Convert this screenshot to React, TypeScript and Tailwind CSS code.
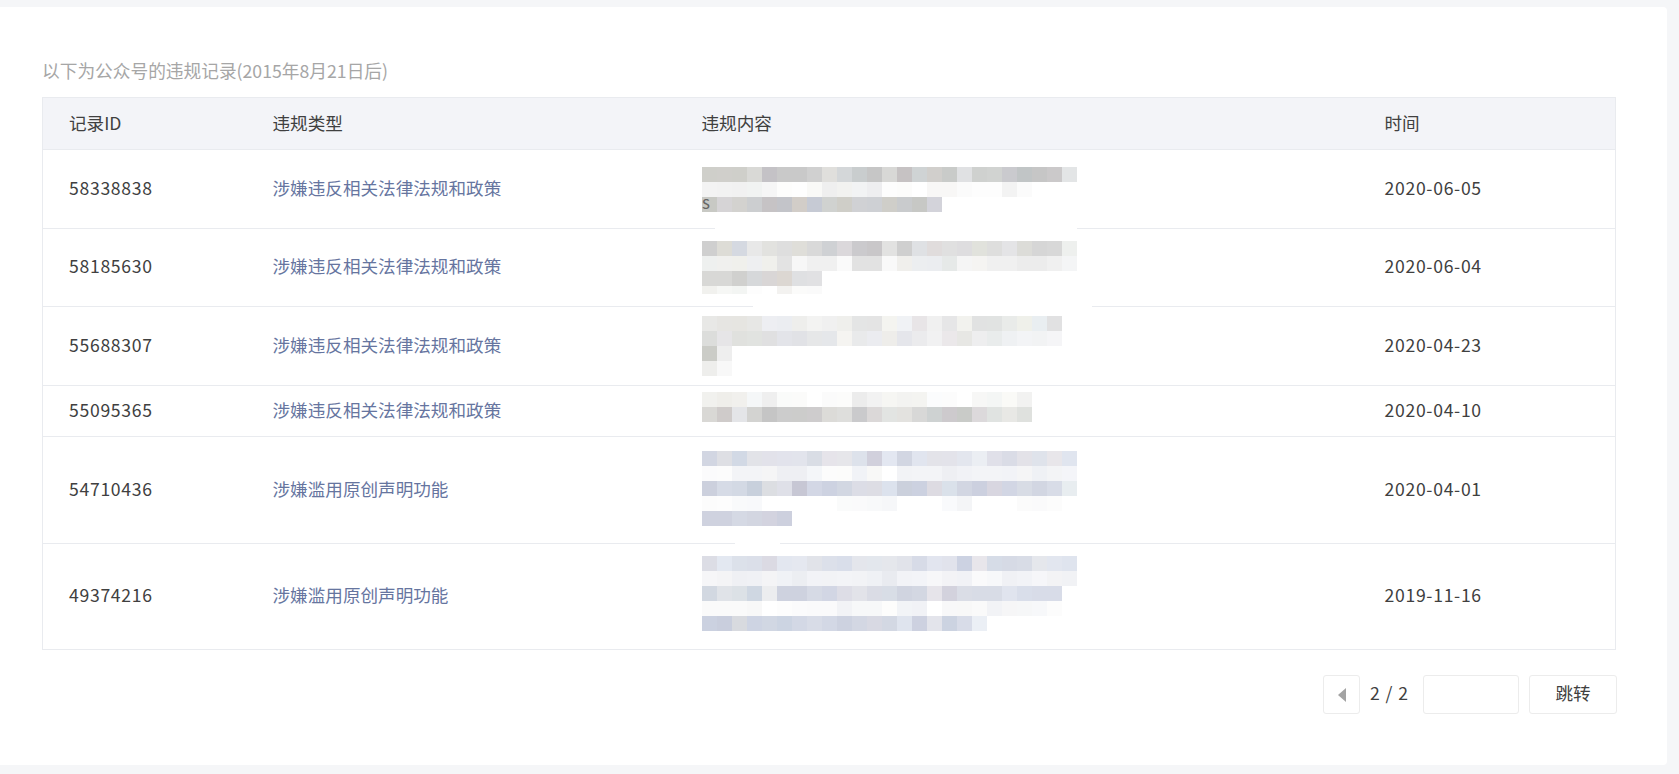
// 违规记录 table, the blurred column is drawn as mosaic blocks
const M1 = [
  'cfcfca d0cfcb cfcfca d9d9d6 c4c2c6 c9c9c9 c9c9c9 d0d0d0 e0dfdc d4d7d9 c9cdce c6c6c6 d8d8d6 c6c2c3 cfd3d4 d1cfcc c9cbc9 e0e1e3 cfd1cf d1d3d1 cacace c1c5c6 c6c6c6 cbc9ca e3e5e6',
  'f3f3f3 f2f2f2 f1f1f1 f1f3f2 f6f6f6 fdfdfc fefefe f9f9f7 efefef f2f2f0 f2f3f4 eeeef0 fdfdfd fcfcfb ffffff f8f7f6 f8f7f6 fbfbfb fdfdfd fdfdfd f3f3f3 fbfbfb',
  'c8c9c4 d6d4d6 d3d2cf ccced0 c6c3c5 c3c4c9 d2cdc8 c6cad4 d0d2d0 cfcec8 d0d1d4 ced0d4 cfcec9 c9cbcd c7c8c5 d3d3da',
]
const M2 = [
  'cfcfcf dddcd6 d5d9e1 e8e8e8 e2e2df dedede dfded9 d9d9d9 cfd1d4 dbd8db cbcacd c9c7c9 e2e2e1 cfcfcf dfe1e4 e0dcdc e0e0e0 dedddf e1e2dc dededd e4e4e6 dcdcd8 d6d6d6 d8d8d8 eef0ee',
  'eef0ef f0f0ee f0f0ec eeeff1 f0f0ec e3e3e3 f7f7f7 f0f0f0 f0f0f0 fafafa e2e2e2 e2e2e2 f9f9f9 f0efec eceef0 ebedf0 e6e9e8 f5f5f5 f5f4f2 f0f0f0 f0f0f0 ececec ececec f0f0f0 f4f5f6',
  'd8d8d6 d8d8d6 d0d0ce d6d8da d9d6d6 dcd7d2 dfe0e2 e1e1e3',
  'f1f1ee f6f7f5 f3f5f3 fdfdfd ffffff f3f2f0 fbfbfa fafafa',
]
const M3 = [
  'e8e8e6 e6e5e2 e6e5e1 e7e7e5 edeef2 ebedf1 eeeeec f3f3f2 f0f0f0 efefec e4e5e5 e4e4e4 f4f4f0 f0f2f5 e8e5e7 f0f0f0 e6e6e7 f2f2ee e1e2e2 e1e3e2 e9ebe9 eff0ea e9eef1 e1e1e2',
  'dcdddb e6e5e7 e0e1de e1e3e0 e0e0e1 e3e4e9 e1e2e6 e6e7e8 e5e7ea f5f4f1 e9eaeb ebecf0 eeedea e5e6eb ebebed f1f1f2 ebe8ea e7e7e4 eeeeef e9ecec eff1f3 f3f4f6 f2f3f4 f5f5f7',
  'cbccc7 eeeeee',
  'eeeeec f8f8f8',
]
const M4 = [
  'f1f1ee efeeea f1f0ed f5f7f8 efefef fafbfa fbfbfa ffffff fbfbfb fcfcfb ececec f2f2f2 f6f6f3 f3f3f1 f4f4f1 fbfcfd fcfcfc ffffff f7f7f6 f4f6f5 fafaf7 f2f2f1',
  'd9d8d5 cfcbca e4e5e8 d3d3d1 c5c5c5 cccccc cccccb cecccd dcdbd8 dededc cacacc dbd8d8 e2e4e2 e3e2df d8d8d7 ced2d2 cdcacd c9cbc8 dcd9db e0e3e1 e8e8e5 dfe1de',
]
const M5 = [
  'd2d6e2 dedfe4 d2d9e5 e2e3e8 e2e2ea e2e3ec e2e4ec d9dde5 e6e4ea e6e6ea dde2eb d1d0dc e3e7f1 d2d6e2 e1e5ef e3e3e9 e3e3ea e3e6ee ebeef3 e0e0e9 dadce6 e3e2e8 dfe3eb e8e6ea e0e5ef',
  'fbfbfc fcfcfc f3f4f7 f3f4f7 f5f5f6 eeeff3 eeeff3 f4f6f9 fcfcfc fcfcfb f1f3f7 f8f8f7 ffffff f2f3f6 f3f4f7 f3f4f7 eeeff3 f1f2f6 f3f4f7 f3f4f7 f2f3f7 f5f5f6 eff1f5 f3f4f6 f4f5f9',
  'ccd0dd d6dbe6 d3d9e4 c8d0dc dcdee2 dfe0e8 c7c7d4 d3d7e5 cdd2e1 d2d7e2 dcdde6 dddde4 dce2ed cbd0dc ccd1e0 dddbe2 dae1ea d2d6e2 ccd0df d8d6e0 d2d6e4 d8dce5 d2d6e2 d8dce7 e8edf0',
  'fcfcfc fdfdfd f9fafb f8f9fb ffffff ffffff ffffff ffffff ffffff fafbfb fafafb f8f9fa f6f7f9 ffffff ffffff ffffff f9fafc f4f5f7 ffffff ffffff ffffff fbfbfb fafafb fcfcfc',
  'cfd2df cfd2df d5d9e4 d3d6e1 d3d3df cdd0de',
]
const M6 = [
  'dcdde5 e3e8f1 dce1ea dbdfe9 dbdae3 e3e7f0 e5e8f0 e1e3e9 dce0ea d9deea e4e6ec e3e7ed e5e7ec e1e3ea d7dbe7 e2e5ef e1e3ec ccd2e2 e8e6eb d6dce7 d6dae5 d8dce6 e5e7ec e2e6ef dfe4ee',
  'f6f6f8 f4f4f6 eff0f4 f0f1f5 f4f4f6 f0f2f6 eceef2 f2f3f7 f2f3f6 f3f4f7 f2f3f6 eff1f5 e9ebf0 f2f3f7 f3f4f8 f7f7f9 f3f3f6 f1f2f6 fafafb f7f8fa f0f1f5 f2f3f7 f6f6f9 f3f3f5 f1f2f5',
  'd2d8e1 e0e3e8 dce1e6 cfd7e2 ecedef ced2df ced2df d6dae5 d2d6e4 dddde6 e2e3e9 dadce5 d8dde6 d0d4e0 d3d7e2 e6e4ea d3d2dd dadde6 d8dce6 d8dce6 e0e4ee d9deea d8dce8 d8dce8',
  'fafafa fafafa fafafa f8f8f8 ffffff fdfdfd fbfbfc fafafb fafafb f2f3f6 f7f8f9 f7f8f9 fdfdfc f2f4f7 f1f2f6 ffffff f8f8f9 f8f8f8 fafafa f2f3f6 f6f6f7 f6f7f8 f7f8fa fcfcfc',
  'cbd1e0 c9cedd d8dadf ced4e3 d1d7e3 ccd4e2 d3d8e5 d8dce7 d3d8e5 cdd2e0 d3d7e3 d8d9e3 d3d8e3 dfe4ee cdd1e0 e3e4eb ccd3e1 d8dce8 ebeff5',
]

const records = [
  { id: '58338838', type: '涉嫌违反相关法律法规和政策', date: '2020-06-05', blocks: M1, h: 45, row: 'h-[79px]', pad: 'pt-[17px]' },
  { id: '58185630', type: '涉嫌违反相关法律法规和政策', date: '2020-06-04', blocks: M2, h: 53, row: 'h-[78px]', pad: 'pt-[12px]' },
  { id: '55688307', type: '涉嫌违反相关法律法规和政策', date: '2020-04-23', blocks: M3, h: 60, row: 'h-[79px]', pad: 'pt-[9px]' },
  { id: '55095365', type: '涉嫌违反相关法律法规和政策', date: '2020-04-10', blocks: M4, h: 30, row: 'h-[51px]', pad: 'pt-[6px]' },
  { id: '54710436', type: '涉嫌滥用原创声明功能', date: '2020-04-01', blocks: M5, h: 75, row: 'h-[107px]', pad: 'pt-[14px]' },
  { id: '49374216', type: '涉嫌滥用原创声明功能', date: '2019-11-16', blocks: M6, h: 75, row: 'h-[106px]', pad: 'pt-[12px]' },
]

function Mosaic({ blocks, h }: { blocks: string[]; h: number }) {
  return (
    <svg width="375" height={h} className="block">
      {blocks.map((line, y) =>
        line.split(' ').map((c, x) => (
          <rect key={`${y}-${x}`} x={x * 15} y={y * 15} width="15" height="15" fill={`#${c}`} />
        )),
      )}
    </svg>
  )
}

function App() {
  return (
    <div
      className="h-[774px] overflow-hidden bg-[#f5f6f8] pt-[7px] text-[17.6px] text-[#404040]"
      style={{ fontFamily: '"Noto Sans CJK SC", "Noto Sans", sans-serif' }}
    >
      <div className="h-[758px] w-[1667px] rounded-r-[4px] bg-white pl-[42px] pt-[50px]">
        <p className="h-[40px] text-[17.7px] leading-[26px] text-[#a6a6a6]">以下为公众号的违规记录(2015年8月21日后)</p>

        <div className="relative w-[1574px]">
          <table className="w-full table-fixed border-collapse border border-[#e9ebef]">
            <thead>
              <tr className="h-[52px] bg-[#f3f4f8] text-left">
                <th className="w-[230px] pb-[1px] pl-[26px] font-normal">记录ID</th>
                <th className="w-[429px] pb-[1px] font-normal">违规类型</th>
                <th className="w-[683px] pb-[1px] font-normal">违规内容</th>
                <th className="pb-[1px] font-normal">时间</th>
              </tr>
            </thead>
            <tbody>
              {records.map((r) => (
                <tr key={r.id} className={`border-t border-[#e9ebef] ${r.row}`}>
                  <td className="pb-[2px] pl-[26px] tracking-[0.7px]">{r.id}</td>
                  <td className="pb-[2px] text-[#66759f]">{r.type}</td>
                  <td className={`align-top ${r.pad}`}>
                    <Mosaic blocks={r.blocks} h={r.h} />
                  </td>
                  <td className="pb-[2px] tracking-[0.7px]">{r.date}</td>
                </tr>
              ))}
            </tbody>
          </table>
          {/* white smears of the blur tool, they run over the row lines */}
          <div className="absolute left-[673px] top-[128px] h-[5px] w-[362px] bg-white" />
          <div className="absolute left-[711px] top-[206px] h-[5px] w-[339px] bg-white" />
          <div className="absolute left-[693px] top-[444px] h-[4px] w-[45px] bg-white" />
          <span className="absolute left-[660px] top-[95px] text-[17px] leading-[20px] text-[#666]">s</span>
        </div>

        <div className="mt-[25px] flex w-[1575px] items-center justify-end">
          <button className="flex h-[39px] w-[37px] items-center justify-center rounded-[3px] border border-[#ececec]">
            <span className="h-0 w-0 border-y-[7px] border-r-[8px] border-y-transparent border-r-[#a3a3a3]" />
          </button>
          <span className="ml-[10px] w-[53px] pb-[2px] tracking-[0.9px]">2 / 2</span>
          <input className="h-[39px] w-[96px] rounded-[3px] border border-[#ececec]" />
          <button className="ml-[10px] h-[39px] w-[88px] rounded-[3px] border border-[#ececec] pb-[2px] text-[17.6px]">跳转</button>
        </div>
      </div>
    </div>
  )
}

export default App
